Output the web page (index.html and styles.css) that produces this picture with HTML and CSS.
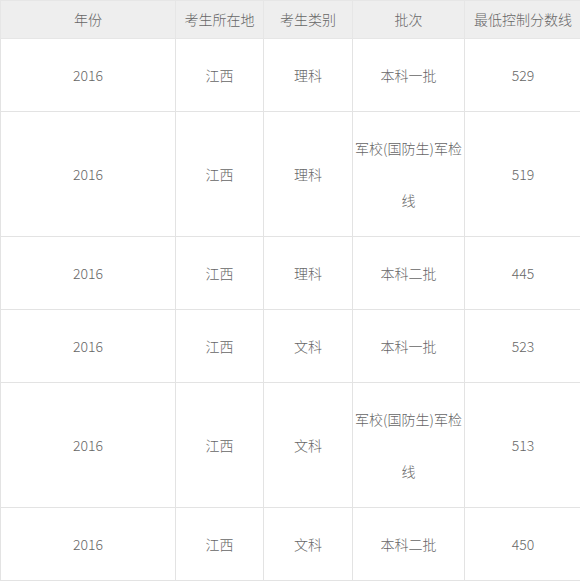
FILE: index.html
```html
<!DOCTYPE html>
<html>
<head>
<meta charset="utf-8">
<link rel="stylesheet" href="styles.css">
</head>
<body>
<table class="score-table">
  <colgroup>
    <col class="c1"><col class="c2"><col class="c3"><col class="c4"><col class="c5">
  </colgroup>
  <thead>
    <tr><th>年份</th><th>考生所在地</th><th>考生类别</th><th>批次</th><th>最低控制分数线</th></tr>
  </thead>
  <tbody>
    <tr><td>2016</td><td>江西</td><td>理科</td><td>本科一批</td><td>529</td></tr>
    <tr><td>2016</td><td>江西</td><td>理科</td><td>军校(国防生)军检线</td><td>519</td></tr>
    <tr><td>2016</td><td>江西</td><td>理科</td><td>本科二批</td><td>445</td></tr>
    <tr><td>2016</td><td>江西</td><td>文科</td><td>本科一批</td><td>523</td></tr>
    <tr><td>2016</td><td>江西</td><td>文科</td><td>军校(国防生)军检线</td><td>513</td></tr>
    <tr><td>2016</td><td>江西</td><td>文科</td><td>本科二批</td><td>450</td></tr>
  </tbody>
</table>
</body>
</html>
```
FILE: styles.css
```css
html { overflow: hidden; }
body {
  margin: 0;
  background: #fff;
  font-family: "Noto Sans CJK SC", "Noto Sans", sans-serif;
  font-size: 14px;
  font-weight: 300;
  color: #666;
}
.score-table {
  border-collapse: collapse;
  table-layout: fixed;
  width: 581px;
}
.c1 { width: 175px; }
.c2 { width: 88px; }
.c3 { width: 89px; }
.c4 { width: 112px; }
.c5 { width: 117px; }
.score-table th,
.score-table td {
  border: 1px solid #e3e3e3;
  text-align: center;
  vertical-align: middle;
  padding: 0 1px;
}
.score-table th {
  background: #eeeeee;
  font-weight: 300;
  height: 37px;
  line-height: 37px;
  border-color: #e6e6e6;
}
.score-table td {
  line-height: 52px;
  padding-top: 10px;
  padding-bottom: 10px;
}
```
